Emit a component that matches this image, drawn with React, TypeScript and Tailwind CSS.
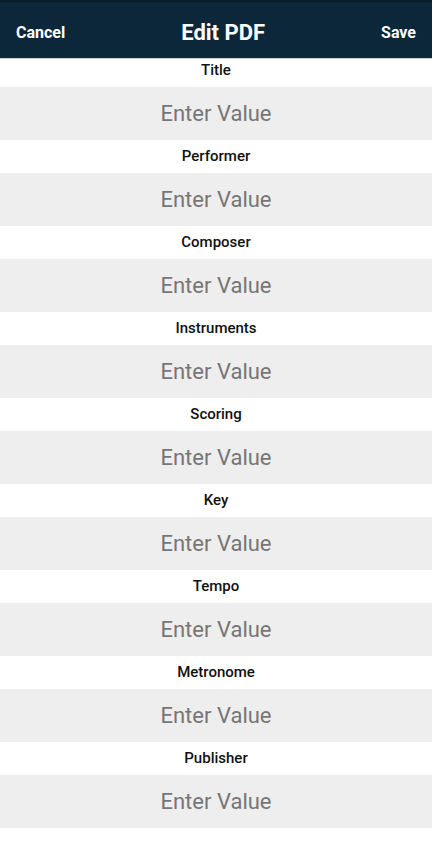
const fields = [
  'Title',
  'Performer',
  'Composer',
  'Instruments',
  'Scoring',
  'Key',
  'Tempo',
  'Metronome',
  'Publisher',
];

export default function App() {
  return (
    <div className="min-h-[862px] bg-white font-['Roboto','Liberation_Sans',sans-serif]">
      <header className="h-[59px] bg-[#0c2739] border-t-2 border-[#081d2b] border-b border-b-[#c9d0d4] flex items-center justify-between px-4 pt-[5px] text-white">
        <button className="text-[16px] font-bold">Cancel</button>
        <h1 className="text-[22px] font-bold">Edit PDF</h1>
        <button className="text-[16px] font-bold">Save</button>
      </header>
      {fields.map((label, i) => (
        <div key={label}>
          <div
            className={
              i === 0
                ? 'h-[28px] pb-[5px] flex items-center justify-center text-[15px] font-medium text-[#111]'
                : 'h-[33px] flex items-center justify-center text-[15px] font-medium text-[#111]'
            }
          >
            {label}
          </div>
          <input
            type="text"
            placeholder="Enter Value"
            className="block w-full h-[53px] bg-[#eeeeee] text-center text-[22px] text-[#222] placeholder:text-[#767676] outline-none"
          />
        </div>
      ))}
    </div>
  );
}
